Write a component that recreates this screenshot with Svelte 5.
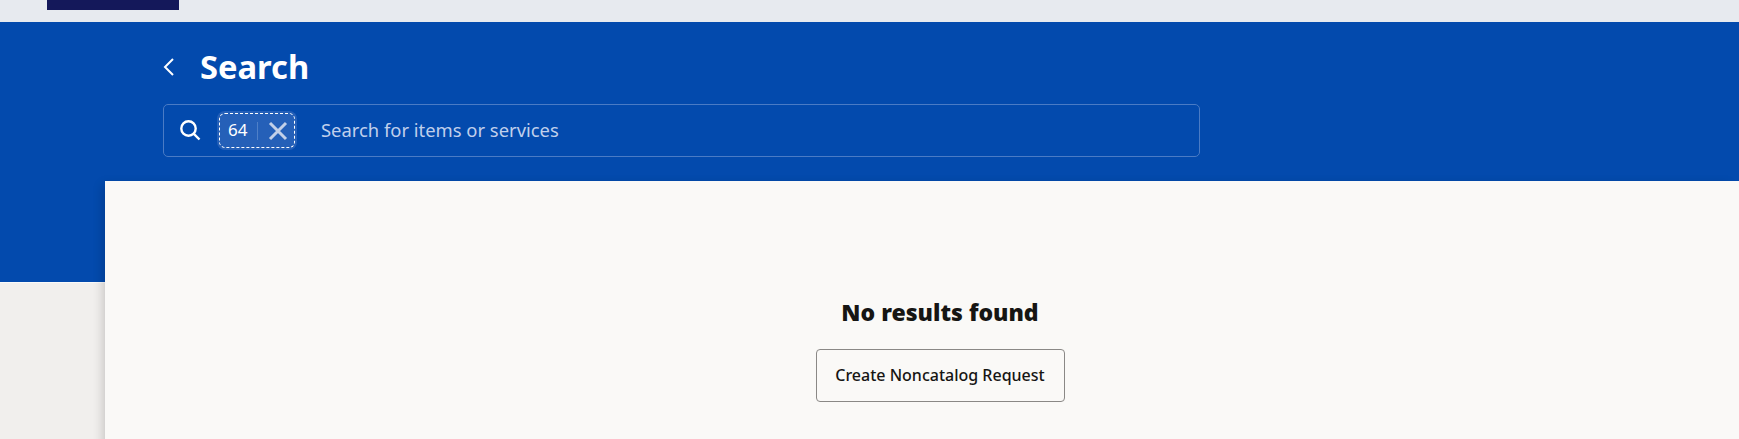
<script>
  const title = 'Search';
</script>

<div class="page">
  <div class="topbar"><div class="logo"></div></div>
  <header class="hero">
    <div class="title-row">
      <svg class="back" width="14" height="20" viewBox="0 0 14 20" fill="none" stroke="#fff" stroke-width="2"><path d="M11 2 L3 10 L11 18"/></svg>
      <h1>{title}</h1>
    </div>
    <div class="searchbox">
      <svg class="mag" width="22" height="22" viewBox="0 0 22 22" fill="none" stroke="#fff" stroke-width="2.4"><circle cx="9.5" cy="9.5" r="7.2"/><path d="M14.6 14.6 L20.5 20.5"/></svg>
      <div class="chip">
        <span class="chip-text">64</span>
        <span class="sep"></span>
        <svg width="20" height="20" viewBox="0 0 20 20" fill="none" stroke="#c3d0e8" stroke-width="3"><path d="M2 2 L18 18 M18 2 L2 18"/></svg>
      </div>
      <span class="placeholder">Search for items or services</span>
    </div>
  </header>
  <main class="panel">
    <h2>No results found</h2>
    <button>Create Noncatalog Request</button>
  </main>
</div>

<style>
  :global(body) { margin: 0; background: #f1efed; overflow: hidden; font-family: "Noto Sans", sans-serif; }
  .page { height: 439px; overflow: hidden; }
  .topbar { height: 22px; background: #e7eaef; padding-left: 47px; }
  .logo { width: 132px; height: 10px; background: #14185a; }
  .hero { height: 261px; box-sizing: border-box; background: #034aad; padding: 23px 0 0 163px; border-bottom: 1px solid #fafafa; }
  .title-row { display: flex; align-items: center; height: 44px; gap: 24px; }
  h1 { margin: 0; color: #fff; font-size: 32.7px; font-weight: 700; line-height: 44px; }
  .back { flex: none; margin-left: -1px; }
  .searchbox { margin-top: 15px; width: 1037px; height: 53px; box-sizing: border-box; border: 1px solid #4a7bc5; border-radius: 5px; display: flex; align-items: center; padding-left: 16px; }
  .mag { flex: none; margin-bottom: 2px; margin-left: -1px; margin-right: 1px; }
  .chip { margin-left: 15px; width: 80px; height: 39px; box-sizing: border-box; background: #2560b8; border-radius: 8px; outline: 1.5px dashed #fff; outline-offset: -3px; display: flex; align-items: center; padding-left: 10px; }
  .chip-text { color: #fff; font-size: 17px; width: 29px; margin-left: 1px; margin-bottom: 3px; }
  .sep { width: 1px; height: 18px; background: #4f80c8; margin-right: 10px; }
  .placeholder { margin-left: 24px; margin-bottom: 2px; color: #c0d0ec; font-size: 18.4px; }
  .panel { margin: -102px 0 0 105px; height: 300px; background: #faf9f7; box-shadow: -6px 0 10px -4px rgba(0,0,0,.18); position: relative; display: flex; flex-direction: column; align-items: center; padding: 115px 0 0 36px; box-sizing: border-box; }
  h2 { margin: 0; font-size: 23px; font-weight: 900; color: #161513; line-height: 33px; }
  button { margin-top: 20px; width: 249px; height: 53px; padding: 0 0 2px; background: transparent; border: 1px solid #8a8886; border-radius: 4px; font: 500 16px "Noto Sans", sans-serif; color: #161513; }
</style>
